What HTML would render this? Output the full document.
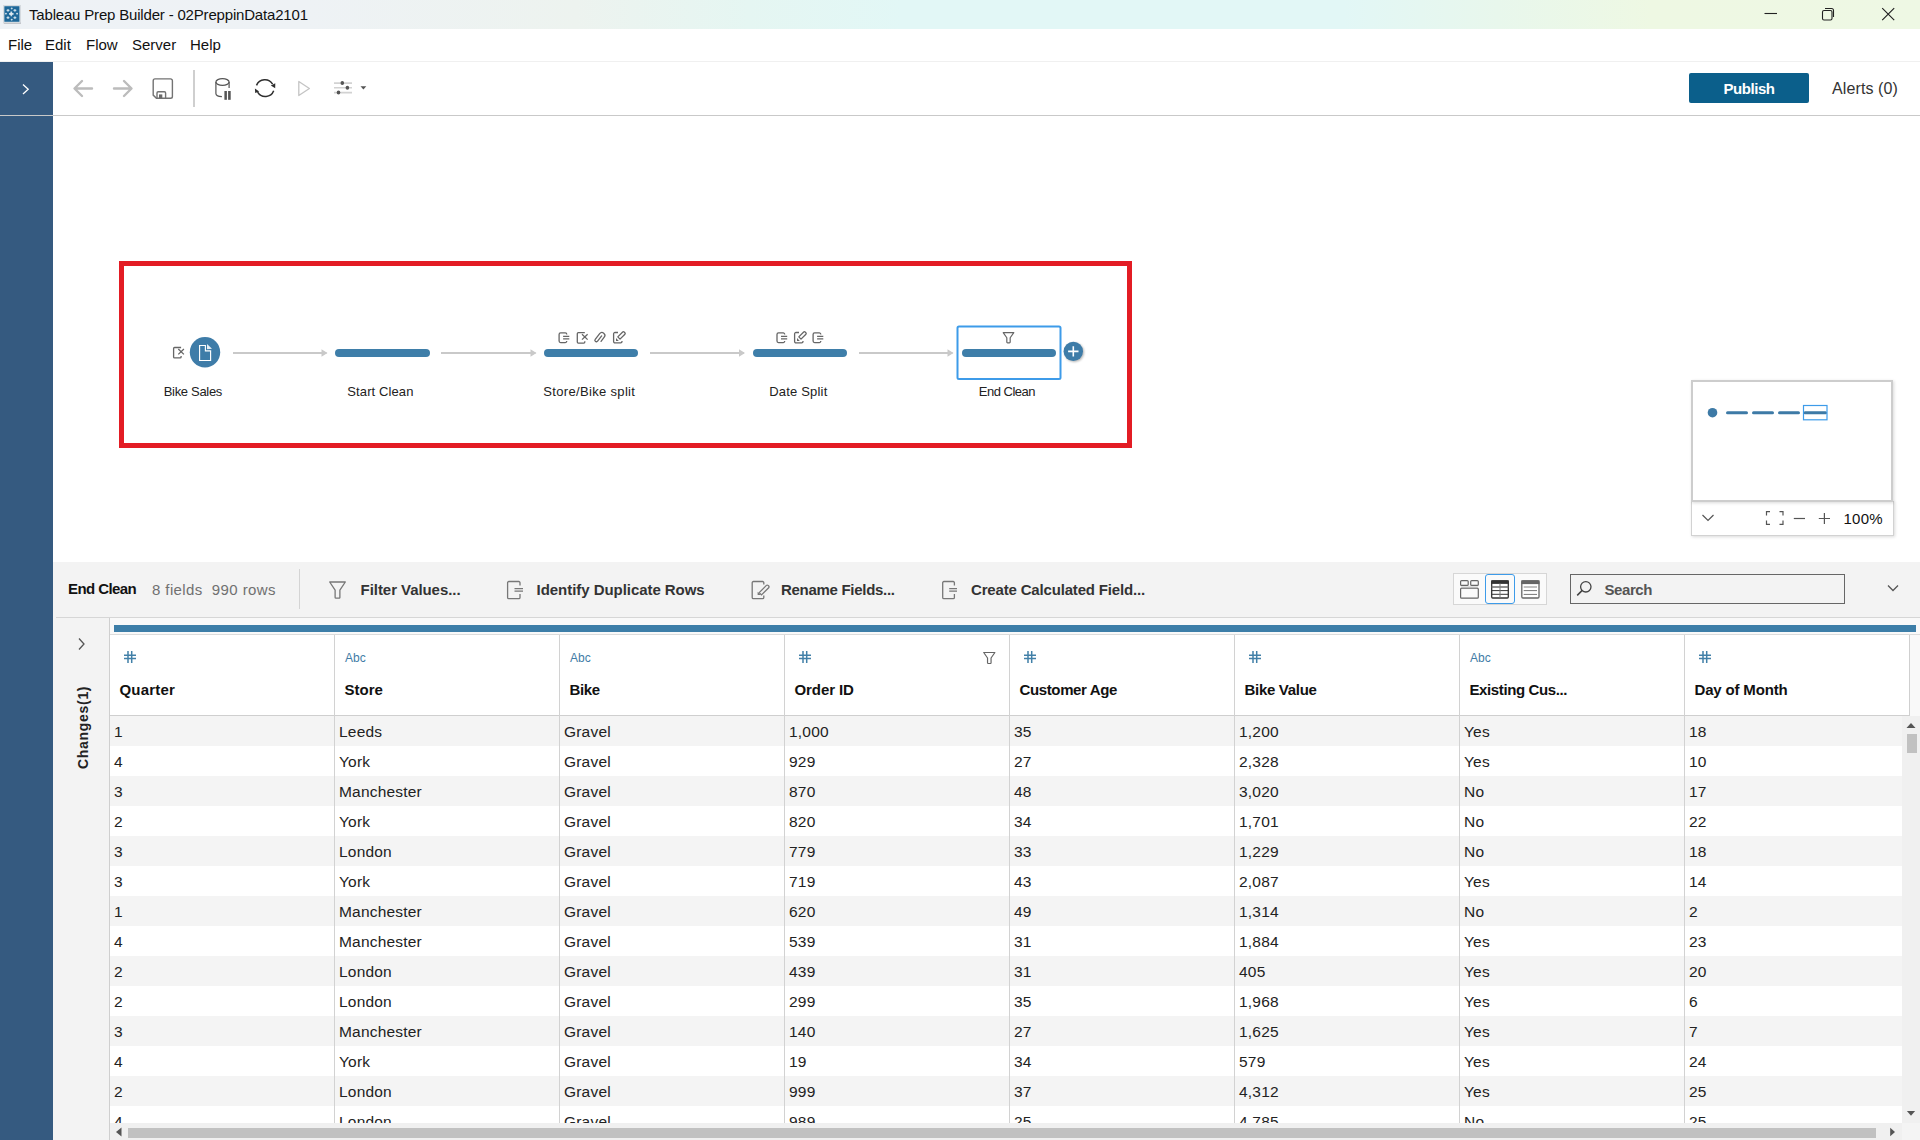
<!DOCTYPE html>
<html><head><meta charset="utf-8"><title>Tableau Prep Builder</title>
<style>
*{margin:0;padding:0;box-sizing:border-box}
html,body{width:1920px;height:1140px;overflow:hidden;background:#fff;font-family:"Liberation Sans",sans-serif;color:#222}
.a{position:absolute}
.nw{white-space:nowrap}
#title{left:0;top:0;width:1920px;height:29px;background:linear-gradient(90deg,#eef2f6 0%,#eef2f5 16%,#edf3ef 30%,#e5f6f2 39%,#e2f7f6 47%,#e2f7f6 70%,#e8f7ec 78%,#eef8e3 86%,#eef8e4 100%)}
#menu{left:0;top:29px;width:1920px;height:33px;background:#fff;border-bottom:1px solid #f0f0f0}
#menu span{position:absolute;top:7px;font-size:15px;color:#111}
#side{left:0;top:62px;width:53px;height:1078px;background:#355a80}
#tbline{left:0;top:115px;width:1920px;height:1px;background:#c9c9c9}
.pub{left:1689px;top:73px;width:120px;height:30px;background:#0b5f8b;border-radius:2px;color:#fff;font-weight:bold;font-size:15px;text-align:center;line-height:32px;letter-spacing:-0.45px}

.redbox{left:119px;top:261px;width:1013px;height:187px;border:5px solid #e31c24}
.nlabel{font-size:13px;color:#222;white-space:nowrap;top:384px}
.bar{height:8.4px;border-radius:4.2px;background:#3e7ea9;top:348.6px}
.mm{left:1691px;top:501px;width:203px;height:35px;border:1px solid #d2d2d2;border-top:none;background:#fff;box-shadow:1px 1px 3px rgba(0,0,0,0.15)}
.mmt{left:1691px;top:380px;width:202px;height:122px;border:2px solid #cdcdcd;background:#fff;box-shadow:1px 1px 3px rgba(0,0,0,0.15)}

#prof{left:53px;top:562px;width:1867px;height:55px;background:#f3f3f3}
#gridbg{left:53px;top:617px;width:1867px;height:523px;background:#f3f3f3}
.pt{top:581px;font-size:15px;font-weight:bold;color:#333;white-space:nowrap}
.hdr{top:635px;height:80px;background:#fff}
.cell{font-size:15.5px;color:#222;white-space:nowrap;position:absolute;letter-spacing:0.2px}
.hname{font-size:15px;font-weight:bold;color:#111;white-space:nowrap;position:absolute;top:681px}
.typ{font-size:12px;color:#3f7ca6;position:absolute;top:651px;white-space:nowrap}
</style></head><body>
<div id="title" class="a">
<svg class="a" style="left:3px;top:5px" width="19" height="19" viewBox="0 0 19 19">
<rect x="0.5" y="0.5" width="17" height="17.5" fill="#f4f7f9" stroke="#d5dadf" stroke-width="1"/>
<rect x="1.3" y="1.2" width="15.2" height="15.6" fill="#1f6899"/>
<path d="M1 18.2h17" stroke="#b5b9bd" stroke-width="1"/>
<g stroke="#c9dbe7" fill="none">
<path d="M8.3 6.6v4.6M6 8.9h4.6" stroke-width="1.6"/>
<path d="M5 4v2.8M3.6 5.4h2.8M11.9 4v2.8M10.5 5.4h2.8M5 11.2v2.8M3.6 12.6h2.8M11.9 11.2v2.8M10.5 12.6h2.8" stroke-width="1.1"/>
<path d="M8.7 2.6v1.8M7.8 3.4h1.8M8.7 13.8v1.8M7.8 14.6h1.8M2.9 7.8v1.8M2 8.6h1.8M14.1 7.8v1.8M13.2 8.6h1.8" stroke-width="1"/>
</g>
<circle cx="8.3" cy="8.9" r="1.3" fill="#dfeaf2"/>
</svg>
<div class="a nw" style="left:29px;top:5.8px;font-size:15px;color:#111;letter-spacing:-0.18px">Tableau Prep Builder - 02PreppinData2101</div>
<svg class="a" style="left:1760px;top:4px" width="140" height="20" viewBox="0 0 140 20">
<path d="M4.5 9.5h12.5" stroke="#222" stroke-width="1.1"/>
<rect x="62.5" y="6.5" width="9.5" height="9.5" rx="1.5" fill="none" stroke="#222" stroke-width="1.1"/>
<path d="M65 4.5h6.5a2 2 0 0 1 2 2V13" fill="none" stroke="#222" stroke-width="1.1"/>
<path d="M122.2 4.2l12 12M134.2 4.2l-12 12" stroke="#222" stroke-width="1.15"/>
</svg>
</div>
<div id="menu" class="a"><span style="left:8px">File</span><span style="left:45px">Edit</span><span style="left:86px">Flow</span><span style="left:132px">Server</span><span style="left:190px">Help</span></div>
<div id="side" class="a"></div>
<div id="tbline" class="a"></div>
<svg class="a" style="left:20px;top:81.5px" width="12" height="14" viewBox="0 0 12 14">
<path d="M3 2.5l5.2 4.8L3 12" fill="none" stroke="#fff" stroke-width="1.3"/>
</svg>
<svg class="a" style="left:60px;top:65px" width="320" height="47" viewBox="60 65 320 47">
<g fill="none" stroke="#bcbcbc" stroke-width="2.4" stroke-linecap="round" stroke-linejoin="round">
<path d="M92 88.5H75M82 81l-7.5 7.5L82 96"/>
<path d="M114 88.5H131M124 81l7.5 7.5L124 96"/>
</g>
<path d="M155 78.9h15.6a1.8 1.8 0 0 1 1.8 1.8v15.8a1.8 1.8 0 0 1-1.8 1.8H156.4l-3.2-3.2V80.7a1.8 1.8 0 0 1 1.8-1.8z" fill="none" stroke="#737373" stroke-width="1.4"/>
<path d="M157 98.3v-5.3a1.2 1.2 0 0 1 1.2-1.2h6.2a1.2 1.2 0 0 1 1.2 1.2v5.3" fill="none" stroke="#737373" stroke-width="1.4"/>
<rect x="159" y="94.4" width="3.3" height="3.9" fill="#6a6a6a"/>
<rect x="193" y="70" width="2" height="37" fill="#cfcfcf"/>
<g fill="none" stroke="#555" stroke-width="1.2">
<ellipse cx="222.5" cy="82" rx="6.6" ry="3.4"/>
<path d="M215.9 82V93.5c0 2 2.5 3 6 3.2M229.1 82V88"/>
</g>
<rect x="224.4" y="91" width="2.5" height="8.8" fill="#555"/>
<rect x="228.1" y="91" width="2.6" height="8.8" fill="#555"/>
<g fill="none" stroke="#2e2e2e" stroke-width="1.5">
<path d="M256.5 85.4A9 9 0 0 1 272.6 84.2"/>
<path d="M273.7 90.8A9 9 0 0 1 257.6 92.2"/>
</g>
<path d="M275.2 88.2L270.8 85.5L275.3 83.3z" fill="#2e2e2e"/>
<path d="M254.9 88.6L259.2 91.6L255.2 93z" fill="#2e2e2e"/>
<path d="M298.8 81.5v14l10.6-7z" fill="none" stroke="#c4c4c4" stroke-width="1.3" stroke-linejoin="round"/>
<path d="M334 83.1h18M334 87.8h18M334 92.6h18" stroke="#d2d2d2" stroke-width="1.6"/>
<g fill="#555">
<ellipse cx="342.3" cy="83.1" rx="1.8" ry="2"/>
<ellipse cx="347.4" cy="87.8" rx="1.8" ry="2"/>
<ellipse cx="338.5" cy="92.6" rx="1.8" ry="2"/>
</g>
<path d="M360.5 86.2h5.8l-2.9 3.3z" fill="#555"/>
</svg>
<div class="a pub">Publish</div>
<div class="a nw" style="left:1832px;top:80px;font-size:16px;color:#333;letter-spacing:0.11px">Alerts (0)</div>
<div class="a redbox"></div>
<svg class="a" style="left:150px;top:315px" width="950" height="70" viewBox="150 315 950 70">
<path d="M233 353H326.5" stroke="#c9c9c9" stroke-width="2"/>
<path d="M321.5 349.2L327.5 353L321.5 356.8z" fill="#c9c9c9"/>
<path d="M441 353H535.5" stroke="#c9c9c9" stroke-width="2"/>
<path d="M530.5 349.2L536.5 353L530.5 356.8z" fill="#c9c9c9"/>
<path d="M650 353H744" stroke="#c9c9c9" stroke-width="2"/>
<path d="M739 349.2L745 353L739 356.8z" fill="#c9c9c9"/>
<path d="M859 353H952.5" stroke="#c9c9c9" stroke-width="2"/>
<path d="M947.5 349.2L953.5 353L947.5 356.8z" fill="#c9c9c9"/>
<circle cx="205" cy="352.3" r="15.2" fill="#3e7ca8"/>
<path d="M199.6 345.5H205.4V350.8H210.6V360.5H199.6Z" fill="none" stroke="#fff" stroke-width="1.15"/>
<path d="M207 344.1L212 348.7L207 349.3Z" fill="#fff" fill-opacity="0.88"/>
<g fill="none" stroke="#666" stroke-width="1.3"><path d="M181.10000000000002 347.5H174.60000000000002a1 1 0 0 0-1 1v8.4a1 1 0 0 0 1 1H180.10000000000002a1 1 0 0 0 1-1V356.1"/><path d="M178.3 349.0l5.6 5.4M183.9 349.0l-5.6 5.4"/></g>
<g fill="none" stroke="#666" stroke-width="1.3"><path d="M566.8 334.4a1.5 1.5 0 0 0-1.5-1.5H560.6a1.5 1.5 0 0 0-1.5 1.5V341.09999999999997a1.5 1.5 0 0 0 1.5 1.5H565.3a1.5 1.5 0 0 0 1.5-1.5"/><path d="M563.1 336.4H569.3M563.1 338.8H569.3"/></g>
<g fill="none" stroke="#666" stroke-width="1.3"><path d="M584.8 332.7H578.3a1 1 0 0 0-1 1v8.4a1 1 0 0 0 1 1H583.8a1 1 0 0 0 1-1V341.3"/><path d="M582.0 334.2l5.6 5.4M587.6 334.2l-5.6 5.4"/></g>
<path transform="rotate(38 600.1 337.8)" d="M603.0 340.0V334.8a2.9 2.9 0 0 0-5.8 0V342.0a1.5 1.5 0 0 0 3 0V335.40000000000003" fill="none" stroke="#666" stroke-width="1.3" stroke-linecap="round"/>
<g fill="none" stroke="#666" stroke-width="1.3" stroke-linejoin="round"><path d="M618 332.5H615a1.4 1.4 0 0 0-1.4 1.4v7.6a1.4 1.4 0 0 0 1.4 1.4H620.6a1.4 1.4 0 0 0 1.4-1.4V341.1"/><path d="M617.8 336.9l4.9-4.9a1 1 0 0 1 1.4 0l0.8 0.8a1 1 0 0 1 0 1.4l-4.9 4.9z"/></g><path d="M616 338.1v2.8h2.8z" fill="#666"/>
<g fill="none" stroke="#666" stroke-width="1.3"><path d="M784.6999999999999 334.4a1.5 1.5 0 0 0-1.5-1.5H778.5a1.5 1.5 0 0 0-1.5 1.5V341.09999999999997a1.5 1.5 0 0 0 1.5 1.5H783.1999999999999a1.5 1.5 0 0 0 1.5-1.5"/><path d="M781.0 336.4H787.1999999999999M781.0 338.8H787.1999999999999"/></g>
<g fill="none" stroke="#666" stroke-width="1.3" stroke-linejoin="round"><path d="M799 332.5H796a1.4 1.4 0 0 0-1.4 1.4v7.6a1.4 1.4 0 0 0 1.4 1.4H801.6a1.4 1.4 0 0 0 1.4-1.4V341.1"/><path d="M798.8 336.9l4.9-4.9a1 1 0 0 1 1.4 0l0.8 0.8a1 1 0 0 1 0 1.4l-4.9 4.9z"/></g><path d="M797 338.1v2.8h2.8z" fill="#666"/>
<g fill="none" stroke="#666" stroke-width="1.3"><path d="M820.8 334.4a1.5 1.5 0 0 0-1.5-1.5H814.6a1.5 1.5 0 0 0-1.5 1.5V341.09999999999997a1.5 1.5 0 0 0 1.5 1.5H819.3a1.5 1.5 0 0 0 1.5-1.5"/><path d="M817.1 336.4H823.3M817.1 338.8H823.3"/></g>
<path d="M1003.2 332.7H1013.8L1010.18 337.75V342.0a0.8 0.8 0 0 1-0.8 0.8H1007.62a0.8 0.8 0 0 1-0.8-0.8V337.75Z" fill="none" stroke="#666" stroke-width="1.2" stroke-linejoin="round"/>
<rect x="957.5" y="326.5" width="103" height="52.5" rx="1.5" fill="none" stroke="#3d9be9" stroke-width="2"/>
<circle cx="1073.3" cy="351.4" r="9.7" fill="#3e7ca8" style="filter:drop-shadow(1px 1px 1px rgba(0,0,0,.3))"/>
<path d="M1068.1 351.4h10.4M1073.3 346.2v10.4" stroke="#fff" stroke-width="1.6"/>
</svg>
<div class="a bar" style="left:335px;width:95px"></div>
<div class="a bar" style="left:543.5px;width:94.5px"></div>
<div class="a bar" style="left:753px;width:94px"></div>
<div class="a bar" style="left:962px;width:94px"></div>
<div class="a nlabel" style="left:163.7px;letter-spacing:-0.31px">Bike Sales</div>
<div class="a nlabel" style="left:347.3px;letter-spacing:0.11px">Start Clean</div>
<div class="a nlabel" style="left:543.3px;letter-spacing:0.33px">Store/Bike split</div>
<div class="a nlabel" style="left:769.2px;letter-spacing:0.19px">Date Split</div>
<div class="a nlabel" style="left:978.8px;letter-spacing:-0.5px">End Clean</div>
<div class="a mm"></div>
<div class="a mmt"></div>
<svg class="a" style="left:1691px;top:380px" width="203" height="156" viewBox="1691 380 203 156">

<circle cx="1712.5" cy="412.7" r="4.8" fill="#3d7aa6"/>
<path d="M1727.5 412.7H1746.5" stroke="#3d7aa6" stroke-width="3" stroke-linecap="round"/>
<path d="M1753.5 412.7H1772.5" stroke="#3d7aa6" stroke-width="3" stroke-linecap="round"/>
<path d="M1779.5 412.7H1798.5" stroke="#3d7aa6" stroke-width="3" stroke-linecap="round"/>
<path d="M1805 412.7H1825.5" stroke="#3d7aa6" stroke-width="3" stroke-linecap="round"/>
<rect x="1803.5" y="405.5" width="23.5" height="14.3" fill="none" stroke="#3d9be9" stroke-width="1.2"/>
<path d="M1702.5 515l5.5 5.5 5.5-5.5" fill="none" stroke="#555" stroke-width="1.2"/>
<path d="M1766.5 515.5v-3.8h3.5M1779.5 511.7h3.5v3.8M1783 520.5v3.8h-3.5M1770 524.3h-3.5v-3.8" fill="none" stroke="#555" stroke-width="1.2"/>
<path d="M1793.8 518.5h11.2" stroke="#555" stroke-width="1.2"/>
<path d="M1818.8 518.5h11.2M1824.4 512.9v11.2" stroke="#555" stroke-width="1.2"/>
</svg>
<div class="a nw" style="left:1843.4px;top:510px;font-size:15px;color:#111;letter-spacing:0.3px">100%</div>
<div id="prof" class="a"></div>
<div class="a nw" style="left:68px;top:580px;font-size:15px;font-weight:bold;color:#111;letter-spacing:-0.59px">End Clean</div>
<div class="a nw" style="left:152px;top:581px;font-size:15px;color:#707070;letter-spacing:0.4px">8 fields&nbsp; 990 rows</div>
<div class="a" style="left:299px;top:569px;width:1px;height:40px;background:#d4d4d4"></div>
<svg class="a" style="left:320px;top:570px" width="660" height="40" viewBox="320 570 660 40">
<path d="M329.7 582.0H345.3L339.88 590.0999999999999V597.4a0.8 0.8 0 0 1-0.8 0.8H335.92a0.8 0.8 0 0 1-0.8-0.8V590.0999999999999Z" fill="none" stroke="#777" stroke-width="1.3" stroke-linejoin="round"/>
<g fill="none" stroke="#777" stroke-width="1.3"><path d="M520 585.5V582.7a1.2 1.2 0 0 0-1.2-1.2H508.8a1.2 1.2 0 0 0-1.2 1.2v14.7a1.2 1.2 0 0 0 1.2 1.2h10a1.2 1.2 0 0 0 1.2-1.2V594"/><path d="M514.5 588.7h8.5M514.5 591.2h8.5"/></g>
<g fill="none" stroke="#777" stroke-width="1.3"><path d="M763.8 584.5V582.7a1.2 1.2 0 0 0-1.2-1.2H753.4a1.2 1.2 0 0 0-1.2 1.2v14.7a1.2 1.2 0 0 0 1.2 1.2h9.2a1.2 1.2 0 0 0 1.2-1.2V595.5"/><path d="M759.2 592.6l7.2-7.2a1.2 1.2 0 0 1 1.7 0l0.6 0.6a1.2 1.2 0 0 1 0 1.7l-7.2 7.2z"/></g><path d="M757.6 591.8v3.2h3.2z" fill="#777"/>
<g fill="none" stroke="#777" stroke-width="1.3"><path d="M954.4 585.5V582.7a1.2 1.2 0 0 0-1.2-1.2H943.9a1.2 1.2 0 0 0-1.2 1.2v14.7a1.2 1.2 0 0 0 1.2 1.2h9.3a1.2 1.2 0 0 0 1.2-1.2V594"/><path d="M949.2 588.7h7.8M949.2 591.2h7.8"/></g>
</svg>
<div class="a pt" style="left:360.6px;letter-spacing:-0.06px">Filter Values...</div>
<div class="a pt" style="left:536.6px;letter-spacing:-0.05px">Identify Duplicate Rows</div>
<div class="a pt" style="left:781px;letter-spacing:-0.29px">Rename Fields...</div>
<div class="a pt" style="left:971px;letter-spacing:-0.17px">Create Calculated Field...</div>
<div class="a" style="left:1453px;top:573px;width:94px;height:32px;border:1px solid #d6d6d6;background:#fafafa"></div>
<div class="a" style="left:1485px;top:574px;width:30px;height:30px;border:1px solid #3d9be9;border-radius:3px;background:#fafafa"></div>
<svg class="a" style="left:1455px;top:575px" width="90" height="28" viewBox="1455 575 90 28">
<g fill="none" stroke="#666" stroke-width="1.2"><rect x="1460.6" y="580.6" width="7.6" height="4.8" rx="1"/><rect x="1470.7" y="580.6" width="7.6" height="4.8" rx="1"/><rect x="1460.6" y="588.2" width="17.7" height="10" rx="1"/></g>
<path d="M1461 586.7h17" stroke="#ddd" stroke-width="1"/>
<rect x="1491.7" y="580.8" width="16.6" height="17.2" rx="1" fill="#fff" stroke="#333" stroke-width="1.3"/>
<rect x="1491.2" y="580.3" width="17.6" height="3.6" fill="#333"/>
<path d="M1491.5 587h17M1491.5 590.6h17M1491.5 594.3h17" stroke="#333" stroke-width="1"/><path d="M1500 583.5v14.5" stroke="#777" stroke-width="1"/><path d="M1491.5 587h17" stroke="#888" stroke-width="1"/>
<rect x="1521.8" y="580.8" width="17.2" height="17.2" rx="1.2" fill="#fff" stroke="#666" stroke-width="1.3"/>
<rect x="1521.3" y="580.3" width="18.2" height="3.8" fill="#666"/>
<path d="M1523.7 587h13.3" stroke="#999" stroke-width="1.2"/><path d="M1523.7 590.6h13.3M1523.7 594.4h13.3" stroke="#777" stroke-width="1"/>
</svg>
<div class="a" style="left:1570px;top:574px;width:275px;height:30px;border:1px solid #666;background:#f3f3f3"></div>
<svg class="a" style="left:1575px;top:579px" width="20" height="20" viewBox="0 0 20 20"><circle cx="10.8" cy="7.8" r="5.2" fill="none" stroke="#444" stroke-width="1.3"/><path d="M7.2 11.4L2.2 16.4" stroke="#444" stroke-width="1.5"/></svg>
<div class="a nw" style="left:1604.4px;top:581px;font-size:15px;font-weight:bold;color:#555;letter-spacing:-0.4px">Search</div>
<svg class="a" style="left:1885px;top:582px" width="16" height="12" viewBox="0 0 16 12"><path d="M3 3.5l5 5 5-5" fill="none" stroke="#555" stroke-width="1.3"/></svg>
<div id="gridbg" class="a"></div>
<div class="a" style="left:56px;top:617px;width:1864px;height:1px;background:#d6d6d6"></div>
<div class="a" style="left:109px;top:618px;width:1px;height:522px;background:#cfcfcf"></div>
<svg class="a" style="left:74px;top:636px" width="14" height="16" viewBox="0 0 14 16"><path d="M5 2.5l5 5.5-5 5.5" fill="none" stroke="#555" stroke-width="1.3"/></svg>
<div class="a nw" style="left:75px;top:768.5px;transform-origin:0 0;transform:rotate(-90deg);font-size:14px;font-weight:bold;color:#222;letter-spacing:0.7px">Changes(1)</div>
<div class="a" style="left:110px;top:618px;width:1810px;height:16px;background:#f9f9f9"></div>
<div class="a" style="left:114px;top:625px;width:1802px;height:7px;background:#3d7ea8"></div>
<div class="a" style="left:110px;top:634px;width:1810px;height:1px;background:#dcdcdc"></div>
<div class="a" style="left:1910px;top:635px;width:10px;height:81px;background:#f9f9f9"></div>
<div class="a hdr" style="left:110px;width:1799px"></div>
<div class="a" style="left:110px;top:715px;width:1800px;height:1px;background:#cfcfcf"></div>
<div class="a" style="left:110px;top:716px;width:1792px;height:30px;background:#f4f4f4;overflow:hidden">
<span class="cell" style="left:4px;top:7px">1</span>
<span class="cell" style="left:229px;top:7px">Leeds</span>
<span class="cell" style="left:454px;top:7px">Gravel</span>
<span class="cell" style="left:679px;top:7px">1,000</span>
<span class="cell" style="left:904px;top:7px">35</span>
<span class="cell" style="left:1129px;top:7px">1,200</span>
<span class="cell" style="left:1354px;top:7px">Yes</span>
<span class="cell" style="left:1579px;top:7px">18</span>
</div>
<div class="a" style="left:110px;top:746px;width:1792px;height:30px;background:#fff;overflow:hidden">
<span class="cell" style="left:4px;top:7px">4</span>
<span class="cell" style="left:229px;top:7px">York</span>
<span class="cell" style="left:454px;top:7px">Gravel</span>
<span class="cell" style="left:679px;top:7px">929</span>
<span class="cell" style="left:904px;top:7px">27</span>
<span class="cell" style="left:1129px;top:7px">2,328</span>
<span class="cell" style="left:1354px;top:7px">Yes</span>
<span class="cell" style="left:1579px;top:7px">10</span>
</div>
<div class="a" style="left:110px;top:776px;width:1792px;height:30px;background:#f4f4f4;overflow:hidden">
<span class="cell" style="left:4px;top:7px">3</span>
<span class="cell" style="left:229px;top:7px">Manchester</span>
<span class="cell" style="left:454px;top:7px">Gravel</span>
<span class="cell" style="left:679px;top:7px">870</span>
<span class="cell" style="left:904px;top:7px">48</span>
<span class="cell" style="left:1129px;top:7px">3,020</span>
<span class="cell" style="left:1354px;top:7px">No</span>
<span class="cell" style="left:1579px;top:7px">17</span>
</div>
<div class="a" style="left:110px;top:806px;width:1792px;height:30px;background:#fff;overflow:hidden">
<span class="cell" style="left:4px;top:7px">2</span>
<span class="cell" style="left:229px;top:7px">York</span>
<span class="cell" style="left:454px;top:7px">Gravel</span>
<span class="cell" style="left:679px;top:7px">820</span>
<span class="cell" style="left:904px;top:7px">34</span>
<span class="cell" style="left:1129px;top:7px">1,701</span>
<span class="cell" style="left:1354px;top:7px">No</span>
<span class="cell" style="left:1579px;top:7px">22</span>
</div>
<div class="a" style="left:110px;top:836px;width:1792px;height:30px;background:#f4f4f4;overflow:hidden">
<span class="cell" style="left:4px;top:7px">3</span>
<span class="cell" style="left:229px;top:7px">London</span>
<span class="cell" style="left:454px;top:7px">Gravel</span>
<span class="cell" style="left:679px;top:7px">779</span>
<span class="cell" style="left:904px;top:7px">33</span>
<span class="cell" style="left:1129px;top:7px">1,229</span>
<span class="cell" style="left:1354px;top:7px">No</span>
<span class="cell" style="left:1579px;top:7px">18</span>
</div>
<div class="a" style="left:110px;top:866px;width:1792px;height:30px;background:#fff;overflow:hidden">
<span class="cell" style="left:4px;top:7px">3</span>
<span class="cell" style="left:229px;top:7px">York</span>
<span class="cell" style="left:454px;top:7px">Gravel</span>
<span class="cell" style="left:679px;top:7px">719</span>
<span class="cell" style="left:904px;top:7px">43</span>
<span class="cell" style="left:1129px;top:7px">2,087</span>
<span class="cell" style="left:1354px;top:7px">Yes</span>
<span class="cell" style="left:1579px;top:7px">14</span>
</div>
<div class="a" style="left:110px;top:896px;width:1792px;height:30px;background:#f4f4f4;overflow:hidden">
<span class="cell" style="left:4px;top:7px">1</span>
<span class="cell" style="left:229px;top:7px">Manchester</span>
<span class="cell" style="left:454px;top:7px">Gravel</span>
<span class="cell" style="left:679px;top:7px">620</span>
<span class="cell" style="left:904px;top:7px">49</span>
<span class="cell" style="left:1129px;top:7px">1,314</span>
<span class="cell" style="left:1354px;top:7px">No</span>
<span class="cell" style="left:1579px;top:7px">2</span>
</div>
<div class="a" style="left:110px;top:926px;width:1792px;height:30px;background:#fff;overflow:hidden">
<span class="cell" style="left:4px;top:7px">4</span>
<span class="cell" style="left:229px;top:7px">Manchester</span>
<span class="cell" style="left:454px;top:7px">Gravel</span>
<span class="cell" style="left:679px;top:7px">539</span>
<span class="cell" style="left:904px;top:7px">31</span>
<span class="cell" style="left:1129px;top:7px">1,884</span>
<span class="cell" style="left:1354px;top:7px">Yes</span>
<span class="cell" style="left:1579px;top:7px">23</span>
</div>
<div class="a" style="left:110px;top:956px;width:1792px;height:30px;background:#f4f4f4;overflow:hidden">
<span class="cell" style="left:4px;top:7px">2</span>
<span class="cell" style="left:229px;top:7px">London</span>
<span class="cell" style="left:454px;top:7px">Gravel</span>
<span class="cell" style="left:679px;top:7px">439</span>
<span class="cell" style="left:904px;top:7px">31</span>
<span class="cell" style="left:1129px;top:7px">405</span>
<span class="cell" style="left:1354px;top:7px">Yes</span>
<span class="cell" style="left:1579px;top:7px">20</span>
</div>
<div class="a" style="left:110px;top:986px;width:1792px;height:30px;background:#fff;overflow:hidden">
<span class="cell" style="left:4px;top:7px">2</span>
<span class="cell" style="left:229px;top:7px">London</span>
<span class="cell" style="left:454px;top:7px">Gravel</span>
<span class="cell" style="left:679px;top:7px">299</span>
<span class="cell" style="left:904px;top:7px">35</span>
<span class="cell" style="left:1129px;top:7px">1,968</span>
<span class="cell" style="left:1354px;top:7px">Yes</span>
<span class="cell" style="left:1579px;top:7px">6</span>
</div>
<div class="a" style="left:110px;top:1016px;width:1792px;height:30px;background:#f4f4f4;overflow:hidden">
<span class="cell" style="left:4px;top:7px">3</span>
<span class="cell" style="left:229px;top:7px">Manchester</span>
<span class="cell" style="left:454px;top:7px">Gravel</span>
<span class="cell" style="left:679px;top:7px">140</span>
<span class="cell" style="left:904px;top:7px">27</span>
<span class="cell" style="left:1129px;top:7px">1,625</span>
<span class="cell" style="left:1354px;top:7px">Yes</span>
<span class="cell" style="left:1579px;top:7px">7</span>
</div>
<div class="a" style="left:110px;top:1046px;width:1792px;height:30px;background:#fff;overflow:hidden">
<span class="cell" style="left:4px;top:7px">4</span>
<span class="cell" style="left:229px;top:7px">York</span>
<span class="cell" style="left:454px;top:7px">Gravel</span>
<span class="cell" style="left:679px;top:7px">19</span>
<span class="cell" style="left:904px;top:7px">34</span>
<span class="cell" style="left:1129px;top:7px">579</span>
<span class="cell" style="left:1354px;top:7px">Yes</span>
<span class="cell" style="left:1579px;top:7px">24</span>
</div>
<div class="a" style="left:110px;top:1076px;width:1792px;height:30px;background:#f4f4f4;overflow:hidden">
<span class="cell" style="left:4px;top:7px">2</span>
<span class="cell" style="left:229px;top:7px">London</span>
<span class="cell" style="left:454px;top:7px">Gravel</span>
<span class="cell" style="left:679px;top:7px">999</span>
<span class="cell" style="left:904px;top:7px">37</span>
<span class="cell" style="left:1129px;top:7px">4,312</span>
<span class="cell" style="left:1354px;top:7px">Yes</span>
<span class="cell" style="left:1579px;top:7px">25</span>
</div>
<div class="a" style="left:110px;top:1106px;width:1792px;height:17px;background:#fff;overflow:hidden">
<span class="cell" style="left:4px;top:7px">4</span>
<span class="cell" style="left:229px;top:7px">London</span>
<span class="cell" style="left:454px;top:7px">Gravel</span>
<span class="cell" style="left:679px;top:7px">989</span>
<span class="cell" style="left:904px;top:7px">25</span>
<span class="cell" style="left:1129px;top:7px">4,785</span>
<span class="cell" style="left:1354px;top:7px">No</span>
<span class="cell" style="left:1579px;top:7px">25</span>
</div>
<div class="a" style="left:334px;top:635px;width:1px;height:488px;background:#d2d2d2"></div>
<div class="a" style="left:559px;top:635px;width:1px;height:488px;background:#d2d2d2"></div>
<div class="a" style="left:784px;top:635px;width:1px;height:488px;background:#d2d2d2"></div>
<div class="a" style="left:1009px;top:635px;width:1px;height:488px;background:#d2d2d2"></div>
<div class="a" style="left:1234px;top:635px;width:1px;height:488px;background:#d2d2d2"></div>
<div class="a" style="left:1459px;top:635px;width:1px;height:488px;background:#d2d2d2"></div>
<div class="a" style="left:1684px;top:635px;width:1px;height:488px;background:#d2d2d2"></div>
<div class="a" style="left:1909px;top:635px;width:1px;height:488px;background:#d2d2d2"></div>
<div class="a" style="left:1909px;top:635px;width:1px;height:81px;background:#cfcfcf"></div>
<svg class="a" style="left:110px;top:640px" width="1800" height="30" viewBox="110 640 1800 30">
<path d="M128 651v12M131.7 651v12M124 655.2h12M124 658.6h12" stroke="#4280a8" stroke-width="1.5" fill="none"/>
<path d="M803 651v12M806.7 651v12M799 655.2h12M799 658.6h12" stroke="#4280a8" stroke-width="1.5" fill="none"/>
<path d="M1028 651v12M1031.7 651v12M1024 655.2h12M1024 658.6h12" stroke="#4280a8" stroke-width="1.5" fill="none"/>
<path d="M1253 651v12M1256.7 651v12M1249 655.2h12M1249 658.6h12" stroke="#4280a8" stroke-width="1.5" fill="none"/>
<path d="M1703 651v12M1706.7 651v12M1699 655.2h12M1699 658.6h12" stroke="#4280a8" stroke-width="1.5" fill="none"/>
<path d="M983.7 652.5H994.9L991.064 658.0V662.6999999999999a0.8 0.8 0 0 1-0.8 0.8H988.3359999999999a0.8 0.8 0 0 1-0.8-0.8V658.0Z" fill="none" stroke="#666" stroke-width="1.2" stroke-linejoin="round"/>
</svg>
<div class="hname" style="left:119.5px;letter-spacing:0.2px">Quarter</div>
<div class="a typ" style="left:345px">Abc</div>
<div class="hname" style="left:344.5px;letter-spacing:0px">Store</div>
<div class="a typ" style="left:570px">Abc</div>
<div class="hname" style="left:569.5px;letter-spacing:-0.35px">Bike</div>
<div class="hname" style="left:794.5px;letter-spacing:-0.08px">Order ID</div>
<div class="hname" style="left:1019.5px;letter-spacing:-0.37px">Customer Age</div>
<div class="hname" style="left:1244.5px;letter-spacing:-0.3px">Bike Value</div>
<div class="a typ" style="left:1470px">Abc</div>
<div class="hname" style="left:1469.5px;letter-spacing:-0.38px">Existing Cus...</div>
<div class="hname" style="left:1694.5px;letter-spacing:-0.17px">Day of Month</div>
<div class="a" style="left:110px;top:1123px;width:1792px;height:17px;background:#f0f0f0"></div>
<div class="a" style="left:1902px;top:1123px;width:18px;height:17px;background:#f4f4f4"></div>
<div class="a" style="left:1902px;top:716px;width:18px;height:407px;background:#f0f0f0"></div>
<div class="a" style="left:128px;top:1128px;width:1748px;height:10px;background:#c1c1c1"></div>
<div class="a" style="left:1907px;top:734px;width:10px;height:19px;background:#c1c1c1"></div>
<svg class="a" style="left:110px;top:1123px" width="1810" height="17" viewBox="110 1123 1810 17"><path d="M121.5 1127.5v9l-5.5-4.5z" fill="#555"/><path d="M1890.2 1127.8v8.4l4.8-4.2z" fill="#555"/></svg>
<svg class="a" style="left:1902px;top:716px" width="18" height="407" viewBox="1902 716 18 407"><path d="M1906.5 728h9l-4.5-5z" fill="#555"/><path d="M1906.9 1111h8.2l-4.1 4.8z" fill="#555"/></svg>
</body></html>
